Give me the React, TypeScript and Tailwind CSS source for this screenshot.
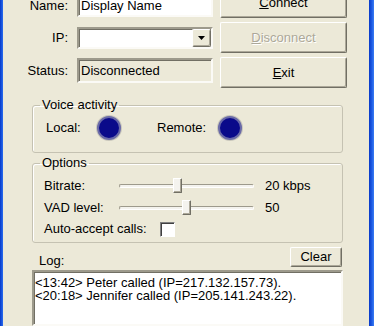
import React from "react";

const sunken =
  "border-2 border-t-[#9d9a8c] border-l-[#9d9a8c] border-b-[#fbfaf6] border-r-[#fbfaf6] shadow-[inset_1px_1px_0_#716f64]";

function Button({
  children,
  className = "",
  disabled = false,
}: {
  children: React.ReactNode;
  className?: string;
  disabled?: boolean;
}) {
  return (
    <div
      className={
        "flex items-center justify-center rounded-[2px] bg-[#ece9d8] border border-t-white border-l-white border-b-[#716f64] border-r-[#716f64] shadow-[inset_-1px_-1px_0_#aca899] " +
        (disabled
          ? "text-[#aca899] [text-shadow:1px_1px_0_#ffffff] "
          : "text-black ") +
        className
      }
    >
      {children}
    </div>
  );
}

function Row({
  label,
  h,
  children,
}: {
  label: string;
  h: string;
  children: React.ReactNode;
}) {
  return (
    <div className={"flex items-center " + h}>
      <div className="w-[65px] text-right leading-[14px]">{label}</div>
      <div className="ml-[9px] w-[136px] h-full">{children}</div>
    </div>
  );
}

function Led() {
  return (
    <div className="w-[24px] h-[24px] rounded-full bg-[#0a0a8a] border-[2px] border-[#6a6aa8] shadow-[0_0_0_1px_#c8c6bb]" />
  );
}

function Slider({ pos }: { pos: number }) {
  return (
    <div className="relative w-[135px] h-full flex items-center">
      <div className="w-full h-[4px] rounded-[2px] bg-[#f4f3ee] border border-t-[#9d9a8c] border-l-[#9d9a8c] border-b-white border-r-white" />
      <div
        className="absolute top-[3px] w-[9px] h-[15px] rounded-[1px] bg-[#f4f3ee] border border-t-white border-l-white border-b-[#716f64] border-r-[#716f64] shadow-[inset_-1px_-1px_0_#aca899]"
        style={{ left: pos }}
      />
    </div>
  );
}

export default function App() {
  return (
    <div
      className="w-[374px] h-[326px] overflow-hidden flex bg-[#ece9d8] text-black text-[13px]"
      style={{ fontFamily: '"Liberation Sans", Arial, sans-serif' }}
    >
      <div className="w-[3px] h-full bg-gradient-to-r from-[#0838c8] to-[#2a6cf0]" />
      <div className="flex-1 flex flex-col overflow-hidden">
        {/* top section */}
        <div className="flex mt-[-13px]">
          <div className="flex flex-col mt-[8px]">
            <Row label="Name:" h="h-[22px]">
              <div className={"h-full bg-white flex items-center pl-[2px] " + sunken}>
                Display Name
              </div>
            </Row>
            <div className="h-[10px]" />
            <Row label="IP:" h="h-[22px]">
              <div className={"h-full bg-white flex justify-end " + sunken}>
                <Button className="w-[19px] h-full">
                  <svg width="7" height="4" viewBox="0 0 7 4">
                    <path d="M0 0h7L3.5 4z" fill="#000" />
                  </svg>
                </Button>
              </div>
            </Row>
            <div className="h-[9px]" />
            <Row label="Status:" h="h-[25px]">
              <div className={"h-full bg-[#ece9d8] flex items-center pl-[2px] " + sunken}>
                Disconnected
              </div>
            </Row>
          </div>
          <div className="flex flex-col gap-[4px] ml-[7px]">
            <Button className="w-[127px] h-[31px]">
              <span>
                <u>C</u>onnect
              </span>
            </Button>
            <Button className="w-[127px] h-[31px]" disabled>
              <span>
                <u>D</u>isconnect
              </span>
            </Button>
            <Button className="w-[127px] h-[31px]">
              <span>
                <u>E</u>xit
              </span>
            </Button>
          </div>
        </div>

        {/* Voice activity */}
        <fieldset className="mt-[10px] ml-[29px] w-[311px] border border-[#c5c2b2] rounded-[3px] shadow-[inset_1px_1px_0_#fff]">
          <legend className="ml-[7px] px-[2px] leading-[14px]">Voice activity</legend>
          <div className="pt-[4px] pb-[12px] pl-[13px] flex items-center">
            <div className="w-[51px] leading-[14px]">Local:</div>
            <Led />
            <div className="ml-[36px] w-[61px] leading-[14px]">Remote:</div>
            <Led />
          </div>
        </fieldset>

        {/* Options */}
        <fieldset className="mt-[3px] ml-[29px] w-[311px] border border-[#c5c2b2] rounded-[3px] shadow-[inset_1px_1px_0_#fff]">
          <legend className="ml-[7px] px-[2px] leading-[14px]">Options</legend>
          <div className="pt-[5px] pb-[3px] pl-[11px] flex flex-col">
            <div className="flex items-center h-[22px]">
              <div className="w-[75px] leading-[14px]">Bitrate:</div>
              <Slider pos={54} />
              <div className="ml-[11px] leading-[14px]">20 kbps</div>
            </div>
            <div className="flex items-center h-[22px]">
              <div className="w-[75px] leading-[14px]">VAD level:</div>
              <Slider pos={63} />
              <div className="ml-[11px] leading-[14px]">50</div>
            </div>
            <div className="flex items-center h-[20px]">
              <div className="w-[116px] leading-[14px]">Auto-accept calls:</div>
              <div className="w-[15px] h-[15px] bg-white border border-t-[#808080] border-l-[#808080] border-b-white border-r-white shadow-[inset_1px_1px_0_#404040]" />
            </div>
          </div>
        </fieldset>

        {/* Log */}
        <div className="mt-[4px] flex items-end h-[20px]">
          <div className="ml-[36px] leading-[13px]">Log:</div>
          <Button className="ml-auto mr-[27px] w-[52px] h-[20px]">Clear</Button>
        </div>
        <div className={"mt-[3px] ml-[29px] w-[311px] h-[80px] bg-white pt-[4px] pl-[1px] leading-[13px] " + sunken}>
          <div>&lt;13:42&gt; Peter called (IP=217.132.157.73).</div>
          <div>&lt;20:18&gt; Jennifer called (IP=205.141.243.22).</div>
        </div>
      </div>
      <div className="w-[5px] h-full bg-gradient-to-r from-[#0838c8] via-[#1a56e0] to-[#3a7cf4]" />
    </div>
  );
}
